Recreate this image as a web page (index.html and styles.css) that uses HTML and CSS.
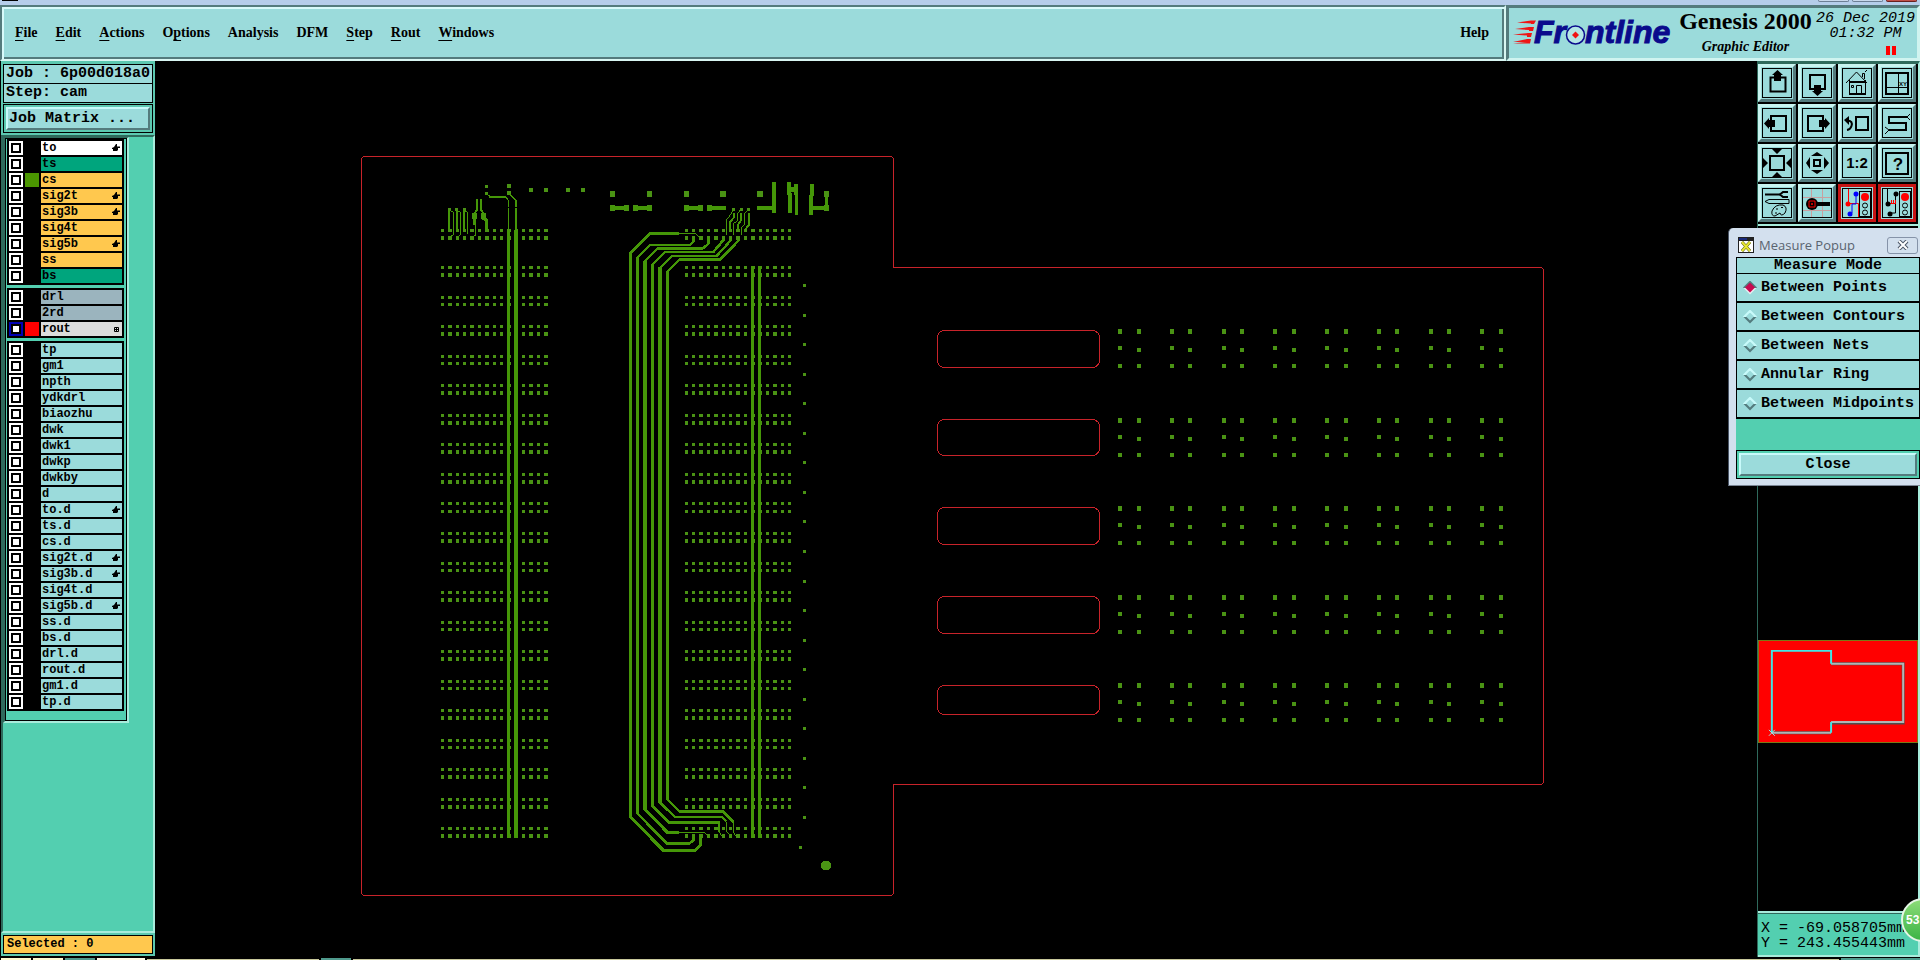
FILE: index.html
```
<!DOCTYPE html>
<html lang="en">
<head>
    <meta charset="UTF-8">
    <title>Genesis 2000 Graphic Editor</title>
    <link rel="stylesheet" href="styles.css">
</head>
<body>
<div class="titleStrip">
    <span class="winIcon"></span>
    <span class="winBn"></span>
    <span class="winBn"></span>
    <span class="winBn winClose"></span>
</div>
<header class="top">
    <nav class="menuBar">
        <button><u>F</u>ile</button>
        <button><u>E</u>dit</button>
        <button><u>A</u>ctions</button>
        <button>O<u>p</u>tions</button>
        <button>Analysis</button>
        <button>DFM</button>
        <button><u>S</u>tep</button>
        <button><u>R</u>out</button>
        <button><u>W</u>indows</button>
        <button class="help">Help</button>
    </nav>
    <div class="brand">
        <svg class="logo" width="164" height="44" viewBox="1512 11 164 44">
            <g fill="#f01414">
                <path d="M1517 22.500L1531 20.500H1536L1534 24H1531L1531 23.500Z"/>
                <path d="M1515 29L1529 27H1534L1533 31H1529L1529 30Z"/>
                <path d="M1513 34.500L1528 33H1532L1531 37H1527L1527 35.500Z"/>
                <path d="M1513 42L1527 39H1531L1530 43.500H1513L1527 42Z"/>
            </g>
            <text x="1534" y="43">Fr</text>
            <text x="1585" y="43">ntline</text>
            <circle cx="1575.500" cy="35" r="9" fill="#b4e6e6" stroke="#0a0a8c" stroke-width="1.500"/>
            <path d="M1575.500 31.500L1579 35L1575.500 38.500L1572 35Z" fill="#f01414"/>
        </svg>
        <div class="product">
            <h1>Genesis 2000</h1>
            <p>Graphic Editor</p>
        </div>
        <div class="clock">
            <div>26 Dec 2019</div>
            <div>01:32 PM</div>
            <div class="pause"><i></i><i></i></div>
        </div>
    </div>
</header>
<main class="work">
    <aside class="left">
        <div class="jobInfo">
            <div>Job : 6p00d018a0</div>
            <div>Step: cam</div>
        </div>
        <div class="matrixBox"><button class="raised">Job Matrix ...</button></div>
        <div class="layerArea">
            <div class="layerFrame" id="layers"></div>
        </div>
        <div class="selected">Selected : 0</div>
    </aside>

    <svg class="board" id="board" viewBox="155 61 1602 896" preserveAspectRatio="xMidYMid meet">
        <g class="rout">
            <path d="M363.500 156.500H891.500L893.500 158.500V267.500H1541.500L1543.500 269.500V782.500L1541.500 784.500H893.500V893.500L891.500 895.500H363.500L361.500 893.500V158.500Z"/>
            <rect x="937.500" y="330.500" width="162" height="37" rx="7"/>
            <rect x="937.500" y="419.500" width="162" height="36" rx="7"/>
            <rect x="937.500" y="507.500" width="162" height="37" rx="7"/>
            <rect x="937.500" y="596.500" width="162" height="37" rx="7"/>
            <rect x="937.500" y="685.500" width="162" height="29" rx="7"/>
        </g>
        <g id="pads" class="pads"></g>
        <!-- traces, three units to one board pixel -->
        <g class="trace" transform="translate(420 160) scale(0.333333)">
            <!-- bus -->
            <path stroke-width="9" d="M778 221H690L632 279V1972L730 2071H825L843 2053V2030"/>
            <path stroke-width="8" d="M653 1961V292L690 255H810L820 245V233"/>
            <path stroke-width="8" d="M653 1961L742 2051H808L820 2040V2028"/>
            <path stroke-width="11" d="M675 302V1950"/>
            <path stroke-width="7" d="M675 304L712 266H848L866 250V233"/>
            <path stroke-width="9" d="M675 1948L742 2017H778"/>
            <path stroke-width="3" d="M778 2017H852L866 2029M778 221H828L840 233"/>
            <path stroke-width="8" d="M912 238L880 276H735L697 314V1938L747 1988H897V2015"/>
            <path stroke-width="3" d="M897 2015L905 2029"/>
            <path stroke-width="11" d="M720 322V1930"/>
            <path stroke-width="7" d="M935 238L890 288H756L720 324M720 1928L766 1972H908L918 1984"/>
            <path stroke-width="3" d="M918 1984L920 2015L935 2029"/>
            <path stroke-width="8" d="M957 240L900 299H778L742 335V1918L778 1954H908L940 1986"/>
            <path stroke-width="3" d="M940 1986V2018L950 2029"/>
            <!-- long verticals -->
            <path stroke-width="9" d="M266 210V2033M997 318V2033M1019 318V2033"/>
            <path stroke-width="12" d="M288 210V2033"/>
            <path stroke-width="4" d="M266 145V210M288 145V210"/>
            <path stroke-width="7" d="M288 150V210"/>
            <path stroke-width="4" d="M198 100L210 110M255 110L266 122V140M266 100L288 122V140"/>
            <path stroke-width="6" d="M208 110H256"/>
            <!-- upper left -->
            <path stroke-width="6" d="M87 150V210M110 150V210M132 150V210"/>
            <path stroke-width="3" d="M90 152L100 156V225M112 152L121 156V225L114 229M134 152L142 156V222M100 225L92 229"/>
            <path stroke-width="6" d="M171 118V150L163 160M183 118V150L190 160"/>
            <path stroke-width="9" d="M163 158V195M190 158V175L200 180V210"/>
            <path stroke-width="3" d="M167 195V225L158 230"/>
            <!-- upper middle fan out -->
            <path stroke-width="3" d="M940 148L930 166L920 178V225M962 148L954 160V180L940 192V225M985 148L974 160V192L964 205V225"/>
            <path stroke-width="6" d="M942 160V172L930 186V210M964 160V180L953 195V210M987 160V195L976 208"/>
            <!-- component bars -->
            <path stroke-width="12" d="M570 144H624M640 144H695M793 144H846M860 144H917M1012 144H1060M1178 144H1226"/>
            <path stroke-width="12" d="M1061 66V158M1107 66V105M1127 72V105M1177 72V108"/>
            <path stroke-width="12" d="M1111 100V158M1173 105V166"/>
            <path stroke-width="9" d="M1129 96V166M1219 110V144"/>
            <path stroke-width="14" d="M1106 88H1132"/>
        </g>
    </svg>

    <aside class="right">
        <div class="tools">
            <button class="tool" aria-label="Pan up"><svg viewBox="0 0 28 28"><rect class="b" x="7.500" y="8.500" width="15" height="14"/><path d="M14.500 1L20 6H18V12H11V6H9Z"/></svg></button>
            <button class="tool" aria-label="Pan down"><svg viewBox="0 0 28 28"><rect class="b" x="7" y="6" width="15" height="14"/><path d="M11 16H18V22H20L14.500 27L9 22H11Z"/></svg></button>
            <button class="tool" aria-label="Home"><svg viewBox="0 0 28 28"><path class="l" d="M3 14L13.500 3L24 14M6.500 11V25.500H22.500V11M13.500 25V16.500H18.500V25M8.500 16.500H10.500V18.500H8.500ZM19.500 8V4.500H21.500V10M22 3L24 1"/><path class="b" d="M6 25H23M7 13H22"/></svg></button>
            <button class="tool" aria-label="Zoom window"><svg viewBox="0 0 28 28"><rect class="b" x="3" y="4" width="22" height="21"/><path class="l" d="M15.500 4V25M3 18.500H25"/><text x="16" y="17" class="xy">XY</text></svg></button>

            <button class="tool" aria-label="Pan left"><svg viewBox="0 0 28 28"><rect class="b" x="8" y="7" width="15" height="15"/><path d="M1 14.500L6 9V11H12V18H6V20Z"/></svg></button>
            <button class="tool" aria-label="Pan right"><svg viewBox="0 0 28 28"><rect class="b" x="5" y="7" width="15" height="15"/><path d="M27 14.500L22 9V11H16V18H22V20Z"/></svg></button>
            <button class="tool" aria-label="Previous view"><svg viewBox="0 0 28 28"><rect class="b" x="13" y="8" width="12" height="13"/><path class="b" d="M5 11.500Q10 12 8.500 17Q7.500 20.500 4 21"/><path d="M1 11L6 7V16Z"/></svg></button>
            <button class="tool" aria-label="Serpentine"><svg viewBox="0 0 28 28"><path class="b" d="M24 8H6V14H23V21H6"/><path class="l" d="M24 8L27 5M24 8L27 11M6 21L2 18M6 21L2 25"/></svg></button>

            <button class="tool" aria-label="Zoom out"><svg viewBox="0 0 28 28"><rect class="b" x="7" y="7" width="14" height="14"/><path d="M9 0H19L14 5ZM9 28H19L14 23ZM0 9V19L5 14ZM28 9V19L23 14Z"/></svg></button>
            <button class="tool" aria-label="Zoom in"><svg viewBox="0 0 28 28"><rect class="b" x="11" y="11" width="6" height="6"/><path d="M14 3L20 7H8ZM14 25L20 21H8ZM3 14L7 8V20ZM26 14L21 8V20Z"/></svg></button>
            <button class="tool" aria-label="Scale 1:2"><svg viewBox="0 0 28 28"><text x="14" y="19" class="ratio">1:2</text></svg></button>
            <button class="tool" aria-label="Query"><svg viewBox="0 0 28 28"><rect class="b" x="3" y="4" width="22" height="21"/><text x="15" y="21" class="ask">?</text></svg></button>

            <button class="tool" aria-label="Tools"><svg viewBox="0 0 28 28"><path class="b" d="M2 5.500H18"/><path class="b" d="M25 3H20L17 5.500L20 8H25"/><path class="l" d="M2 12.500L6 10.500H26V14.500H6ZM9 22Q12 15 20 16Q25 18 22 24Q18 28 17 24L12 27Q8 27 9 22ZM13 20H15M18 18.500H20M14 24H12"/></svg></button>
            <button class="tool" aria-label="Probe"><svg viewBox="0 0 28 28"><path class="grid" d="M0 8.500H28M0 21.500H28M8.500 0V28M19.500 0V28"/><circle cx="9" cy="15" r="6"/><path d="M14 13H27V17H14Z"/><path class="red" d="M6 12H12V18H6ZM8.500 14.500H9.500V15.500H8.500Z"/></svg></button>
            <button class="tool active" aria-label="Net highlight on"><svg viewBox="0 0 28 28"><path class="red" d="M5.500 0V14.500H15.500V28"/><path class="blue" d="M13 5V15H9V24"/><circle cx="5" cy="15" r="2.500" fill="#f00"/><circle cx="13" cy="5" r="2.500" fill="#00f"/><circle cx="7" cy="25" r="2.500" fill="#00f"/><rect class="l" x="16.500" y="2.500" width="11" height="25"/><circle cx="22" cy="8" r="4" fill="#f00"/><circle class="l" cx="22" cy="16.500" r="2.500"/><circle class="l" cx="22" cy="23.500" r="2.500"/></svg></button>
            <button class="tool active" aria-label="Net highlight off"><svg viewBox="0 0 28 28"><path class="l" d="M4.500 0V14M12.500 5V24H8"/><path class="red" d="M7 14.500H13M8.500 11V14M10.500 11V14M12.500 11V14"/><circle cx="5" cy="15" r="2.500"/><circle cx="13" cy="5" r="2.500"/><circle cx="7" cy="25" r="2.500"/><rect class="l" x="16.500" y="2.500" width="11" height="25"/><circle cx="22" cy="8" r="4" fill="#f00"/><circle class="l" cx="22" cy="16.500" r="2.500"/><circle class="l" cx="22" cy="23.500" r="2.500"/></svg></button>
        </div>
        <div class="overview">
            <svg viewBox="0 0 160 102">
                <path d="M13 93H73M73 23H146V83H73" stroke="#4f4f4f" stroke-width="3"/>
                <path d="M13 93H73M73 23H146V82H73" stroke="#b4b4b4" stroke-width="2"/>
                <path d="M13 93V10H73V23M73 82V93" stroke="#40e6e6" stroke-width="2"/>
                <path d="M10 90L16 96M16 90L10 96" stroke="#aee0e0" stroke-width="1"/>
            </svg>
        </div>
        <div class="coords">
            <div>X = -69.058705mm</div>
            <div>Y = 243.455443mm</div>
        </div>
    </aside>
</main>
<footer class="bottomStrip">
    <span class="s1"></span><span class="s1"></span><span class="s2"></span><span class="s3"></span><span class="s4"></span><span class="s2"></span><span class="s4 grow"></span><span class="s2 wide"></span>
</footer>

<section class="popup">
    <div class="popupTitle">
        <svg width="16" height="16" viewBox="0 0 16 16"><rect width="16" height="16" fill="#222"/><rect x="1" y="4" width="14" height="11" fill="#fff"/><rect x="1" y="1" width="8" height="2" fill="#1a2a7a"/><path d="M4 5L12 14M12 5L4 14" stroke="#55550a" stroke-width="3"/><path d="M4 5L12 14M12 5L4 14" stroke="#e6e632" stroke-width="2"/></svg>
        <span>Measure Popup</span>
        <button class="popupX" aria-label="Close window"><svg width="12" height="10" viewBox="0 0 12 10"><path d="M2 1L10 9M10 1L2 9" stroke="#4a5566" stroke-width="4"/><path d="M2 1L10 9M10 1L2 9" stroke="#fff" stroke-width="2"/></svg></button>
    </div>
    <div class="popupBody">
        <div class="modeTitle">Measure Mode</div>
        <label class="mode"><input type="radio" name="mode" checked>Between Points</label>
        <label class="mode"><input type="radio" name="mode">Between Contours</label>
        <label class="mode"><input type="radio" name="mode">Between Nets</label>
        <label class="mode"><input type="radio" name="mode">Annular Ring</label>
        <label class="mode"><input type="radio" name="mode">Between Midpoints</label>
        <div class="closeBox"><button class="raised">Close</button></div>
    </div>
</section>
<div class="badge">53</div>
<script src="script.js"></script>
</body>
</html>
```
FILE: styles.css
```
*{
    margin: 0;
    padding: 0;
    box-sizing: border-box;
}
body
{
    height: 100vh;
    display: flex;
    flex-direction: column;
    position: relative;
    overflow: hidden;
    background: #000;
    color: #000;
    font: bold 15px/18px "Liberation Mono", monospace;
}
button
{
    font: inherit;
    color: inherit;
    border: none;
    background: none;
}
.titleStrip
{
    height: 5px;
    display: flex;
    gap: 3px;
    padding: 0 3px 0 2px;
    background: #b5cdea;
}
.winIcon
{
    width: 16px;
    height: 1px;
    margin-right: auto;
    background: #000;
}
.winBn
{
    width: 31px;
    height: 2px;
    border: 1px solid #6d7f95;
    border-top: none;
    border-radius: 0 0 3px 3px;
    background: #c8d8ec;
}
.winClose
{
    background: #c0504a;
    border-color: #6a2020;
}

/* header */
.top
{
    display: flex;
    height: 56px;
    flex: none;
}
.menuBar
{
    flex: 1;
    display: flex;
    align-items: center;
    gap: 18px;
    padding: 0 15px 0 13px;
    background: #9bdbdb;
    border: 2px solid;
    border-color: #547b7d #d8f6f2 #d8f6f2 #547b7d;
    box-shadow: inset 2px 2px #d8fafa, inset -2px -2px #547b7d;
    font: bold 14px/18px "Liberation Serif", serif;
}
.menuBar u
{
    text-underline-offset: 3px;
    text-decoration-thickness: 1px;
    text-decoration-skip-ink: none;
}
.help
{
    margin-left: auto;
}
.brand
{
    width: 414px;
    display: flex;
    background: #9bdbdb;
    border: 3px solid;
    border-color: #547b7d #d0f4f0 #d0f4f0 #547b7d;
    padding: 3px 1px 0 3px;
}
.logo
{
    flex: none;
}
.logo text
{
    font: italic bold 32px "Liberation Sans", sans-serif;
    fill: #0a0a8c;
    stroke: #0a0a8c;
}
.product
{
    flex: 1;
    text-align: center;
    white-space: nowrap;
}
.product h1
{
    font: bold 24px/21px "Liberation Serif", serif;
}
.product p
{
    font: italic bold 14px/30px "Liberation Serif", serif;
}
.clock
{
    width: 101px;
    text-align: center;
    font-style: italic;
    font-weight: normal;
    line-height: 15px;
    white-space: nowrap;
}
.pause
{
    display: flex;
    gap: 2px;
    justify-content: flex-end;
    padding: 5px 20px 0 0;
}
.pause i
{
    width: 4px;
    height: 9px;
    background: #f00;
}

/* work area */
.work
{
    flex: 1;
    min-height: 0;
    display: flex;
    align-items: stretch;
}
.left
{
    width: 155px;
    flex: none;
    display: flex;
    flex-direction: column;
    margin-bottom: 1px;
    border-left: 1px solid #000;
    background: #5cc8b0;
}
.jobInfo
{
    margin: 3px 2px 1px 2px;
    border: 1px solid #000;
    background: #9bdbdb;
    white-space: nowrap;
}
.jobInfo div
{
    height: 18px;
    padding-left: 2px;
}
.jobInfo div + div
{
    height: 19px;
    border-top: 1px solid #000;
}
.matrixBox
{
    margin: 0 2px;
    padding: 2px;
    border: 1px solid #000;
}
.raised
{
    display: block;
    width: 100%;
    height: 23px;
    background: #9bdbdb;
    border: 2px solid;
    border-color: #c8fafa #547b7d #547b7d #c8fafa;
}
.matrixBox .raised
{
    padding-left: 1px;
    text-align: left;
}
.layerArea
{
    flex: 1;
    margin-top: 2px;
    background: #53cfb0;
    border: 2px solid;
    border-color: #2f6a5c #a8ecdc #a8ecdc #2f6a5c;
}
.layerFrame
{
    width: 126px;
    padding: 1px 3px 10px 2px;
    display: flex;
    flex-direction: column;
    gap: 3px;
    border: solid;
    border-width: 1px 2px 2px 2px;
    border-color: #2f6a5c #a8ecdc #a8ecdc #2f6a5c;
    box-shadow: inset 1px 1px #000, inset -1px -1px #000;
}
.layerGroup
{
    display: grid;
    gap: 2px;
    padding: 2px;
    background: #000;
}
.layerRow
{
    display: flex;
    gap: 2px;
    height: 14px;
}
.layerRow input
{
    appearance: none;
    flex: none;
    width: 14px;
    height: 14px;
    border: 2px solid #fff;
    background: #fff;
    box-shadow: inset 0 0 0 2px #000;
}
.layerRow input:checked
{
    border-color: #0000b4;
}
.swatch
{
    width: 14px;
    flex: none;
}
.layerRow label
{
    flex: 1;
    display: flex;
    align-items: center;
    justify-content: space-between;
    padding: 0 2px 0 1px;
    font-size: 12px;
    line-height: 14px;
    background: #9bdbdb;
}
.layerRow .silk{ background: #fff; }
.layerRow .mask{ background: #00a57d; }
.layerRow .signal{ background: #ffc84e; }
.layerRow .drill{ background: #9bb4be; }
.layerRow .routed{ background: #dcdcdc; }
.selected
{
    margin: 2px;
    padding-left: 3px;
    border: 1px solid #000;
    background: #ffc84e;
    font-size: 12px;
    line-height: 17px;
}

/* board */
.board
{
    flex: 1;
    min-width: 0;
    height: 100%;
    background: #000;
}
.rout
{
    fill: none;
    stroke: #c8232a;
    shape-rendering: crispEdges;
}
.pads
{
    fill: #4a9314;
    shape-rendering: crispEdges;
}
.trace
{
    fill: none;
    stroke: #459708;
    shape-rendering: crispEdges;
}

/* right panel */
.right
{
    width: 163px;
    flex: none;
    display: flex;
    flex-direction: column;
    border: solid;
    border-width: 3px 2px 0 1px;
    border-color: #2f6a5c #a8ecdc #a8ecdc #2f6a5c;
}
.tools
{
    display: grid;
    grid-template-columns: repeat(4, 38px);
    gap: 2px;
    padding-bottom: 2px;
    border-bottom: 2px solid #a8ecdc;
}
.tool
{
    height: 38px;
    padding: 1px;
    background: #9bdbdb;
    border: 3px solid;
    border-color: #c8f4f0 #547b7d #547b7d #c8f4f0;
}
.tool svg
{
    display: block;
    width: 30px;
    height: 30px;
    border: 1px solid #000;
}
.tool .l
{
    fill: none;
    stroke: #000;
}
.tool .b
{
    fill: none;
    stroke: #000;
    stroke-width: 2px;
}
.tool .red
{
    fill: none;
    stroke: #f00;
}
.tool .blue
{
    fill: none;
    stroke: #00f;
}
.tool .grid
{
    stroke: #c8a0a0;
}
.tool.active
{
    border-color: #c81414;
}
.tool text
{
    font-family: "Liberation Sans", sans-serif;
}
.tool .xy
{
    font-size: 6px;
}
.tool .ratio
{
    font-size: 15px;
    font-weight: bold;
    text-anchor: middle;
}
.tool .ask
{
    font-size: 17px;
    text-anchor: middle;
}
.overview
{
    margin: auto 0 168px 0;
    background: #f00;
    border: 1px solid #7a7a14;
}
.overview svg
{
    display: block;
    width: 100%;
    fill: none;
}
.coords
{
    height: 46px;
    padding: 8px 0 0 3px;
    background: #53cfb0;
    border-top: 2px solid #a8ecdc;
    border-bottom: 2px solid #a8ecdc;
    box-shadow: inset 0 1px #2f6a5c;
    font-weight: normal;
    line-height: 15px;
    white-space: nowrap;
}

.bottomStrip
{
    height: 3px;
    flex: none;
    display: flex;
    align-items: flex-end;
    gap: 2px;
    padding-left: 1px;
}
.bottomStrip span
{
    width: 30px;
    height: 2px;
}
.bottomStrip .s1{ background: #fffbd0; }
.bottomStrip .s2{ background: #4f9a8c; }
.bottomStrip .s3{ background: #fffbe6; width: 48px; }
.bottomStrip .s4{ background: #c8c89b; width: 172px; height: 1px; }
.bottomStrip .grow{ flex: 1; }
.bottomStrip .wide{ width: 79px; }

/* measure popup, floats over the right panel */
.popup
{
    position: absolute;
    top: 228px;
    right: 0;
    width: 192px;
    padding: 0 0 6px 7px;
    background: #d3e0ee;
    border-left: 1px solid #4a5566;
    border-bottom: 1px solid #7a8594;
    border-radius: 5px 0 0 0;
}
.popupTitle
{
    display: flex;
    align-items: center;
    gap: 5px;
    height: 29px;
    padding: 5px 2px 0 2px;
    color: #5a6470;
    font: 13px/18px "Open Sans", sans-serif;
}
.popupX
{
    width: 31px;
    height: 17px;
    margin-left: auto;
    display: flex;
    align-items: center;
    justify-content: center;
    border: 1px solid #8593a8;
    border-radius: 3px;
}
.popupBody
{
    background: #53cfb0;
}
.modeTitle
{
    height: 16px;
    border: 1px solid #000;
    border-bottom: none;
    background: #9bdbdb;
    line-height: 16px;
    text-align: center;
}
.mode
{
    display: flex;
    align-items: center;
    gap: 4px;
    height: 29px;
    padding-left: 6px;
    border: 1px solid #000;
    box-shadow: 0 1px #000;
    background: #9bdbdb;
    white-space: nowrap;
}
.mode input
{
    appearance: none;
    flex: none;
    width: 14px;
    height: 14px;
    clip-path: polygon(50% 0, 100% 50%, 50% 100%, 0 50%);
    background: linear-gradient(#c8fafa 50%, #547b7d 50%);
}
.mode input::before
{
    content: "";
    display: block;
    width: 8px;
    height: 8px;
    margin: 3px;
    clip-path: polygon(50% 0, 100% 50%, 50% 100%, 0 50%);
    background: #9bdbdb;
}
.mode input:checked
{
    background: linear-gradient(#547b7d 50%, #e6f0f0 50%);
}
.mode input:checked::before
{
    width: 10px;
    height: 10px;
    margin: 2px;
    background: #c80a50;
}
.closeBox
{
    margin-top: 32px;
    padding: 2px;
    border: 1px solid #000;
}
.badge
{
    position: absolute;
    right: -25px;
    bottom: 18px;
    width: 44px;
    height: 44px;
    padding-left: 3px;
    border: 2px solid #e6f5e6;
    border-radius: 50%;
    background: linear-gradient(#8cdc78, #3cb446);
    color: #fff;
    font: bold 12px/40px "Liberation Sans", sans-serif;
}
```
FILE: script.js
```
// name, class, mark (h = hand, g = grid), swatch colour
var groups=[
    [["to","silk","h"],["ts","mask"],["cs","signal","","#4a9600"],["sig2t","signal","h"],["sig3b","signal","h"],
     ["sig4t","signal"],["sig5b","signal","h"],["ss","signal"],["bs","mask"]],
    [["drl","drill"],["2rd","drill"],["rout","routed","g","#f00"]],
    [["tp"],["gm1"],["npth"],["ydkdrl"],["biaozhu"],["dwk"],["dwk1"],["dwkp"],["dwkby"],["d"],
     ["to.d","","h"],["ts.d"],["cs.d"],["sig2t.d","","h"],["sig3b.d","","h"],["sig4t.d"],["sig5b.d","","h"],
     ["ss.d"],["bs.d"],["drl.d"],["rout.d"],["gm1.d"],["tp.d"]]
];
var marks={
    h:'<svg width="8" height="8" viewBox="0 0 8 8"><path d="M4 0H5V2.500H8V4H6V6L5 7H1V5H0V4L2 3Z"/></svg>',
    g:'<svg width="7" height="7" viewBox="0 0 7 7"><path d="M1.500 1.500H5.500V5.500H1.500ZM3.500 1V6M1 3.500H6" fill="none" stroke="#000"/></svg>'
};
var html="";
for(var i=0;i<groups.length;i++){
    html+='<div class="layerGroup">';
    for(var j=0;j<groups[i].length;j++){
        var l=groups[i][j];
        var id="layer"+i+"_"+j;
        html+='<div class="layerRow"><input type="checkbox" id="'+id+'"'+(l[0]==="rout"?" checked":"")+'>'
            +'<span class="swatch" style="background:'+(l[3] || "#000")+'"></span>'
            +'<label for="'+id+'" class="'+(l[1] || "")+'">'+l[0]+(marks[l[2]] || "")+'</label></div>';
    }
    html+='</div>';
}
document.getElementById("layers").innerHTML=html;

// pads of the board
var pads="";
function pad(x,y,w,h) {
    pads+='<rect x="'+(x-w/2)+'" y="'+(y-h/2)+'" width="'+w+'" height="'+h+'"/>';
}
// two connector fields: one pair of rows on top, then twenty pairs
function field(x0) {
    for(var r=-1;r<20;r++){
        var y=r<0 ? 230.3 : 267.6+r*29.54;
        for(var c=0;c<15;c++){
            var x=x0+c*7.38;
            pad(x,y,3.4,3);
            pad(x,y+7.4,3.4,3.6);
        }
    }
}
field(442.6);
field(686.4);
// contact groups on the right half
for(var row=0;row<5;row++){
    var top0=331.5+row*88.5;
    for(var col=0;col<8;col++){
        var cx=1120+col*51.75;
        pad(cx,top0,4,5);
        pad(cx+18.6,top0,4,5);
        pad(cx,top0+16.5,4,4);
        pad(cx+18.6,top0+18.5,4,4);
        pad(cx,top0+34.5,4,4);
        pad(cx+18.6,top0+34.5,4,4);
    }
}
// via column
for(var v=0;v<19;v++) pad(804.3,285.7+v*29.53,3,3);
pad(800.3,847.3,3,3);
// single pads on top
[[486,186,3],[508.5,186,4],[486,193,3],[508.5,193,4],[531,190,4],[546,190,4],[568,190,4],[583,190,4],
 [612.5,194,5],[649.5,194,5],[686.5,194,5],[723,194,6],[760,194,6],[826.5,194,5],
 [449,209,3],[456.5,209,3],[464.5,209,3],[733.5,209,3],[741,209,3],[748.5,209,3],
 [474,215.5,5],[483.5,215.5,5],[612.5,208,5],[626,208,5],[635,208,5],[649.5,208,5],
 [686.5,208,5],[700,208,5],[709,208,5],[826.5,208,5]].forEach(function (p) {
    pad(p[0],p[1],p[2],p[2]===5 ? 6 : p[2]);
});
pads+='<circle cx="826" cy="865.5" r="5"/>';
document.getElementById("pads").innerHTML=pads;
```
